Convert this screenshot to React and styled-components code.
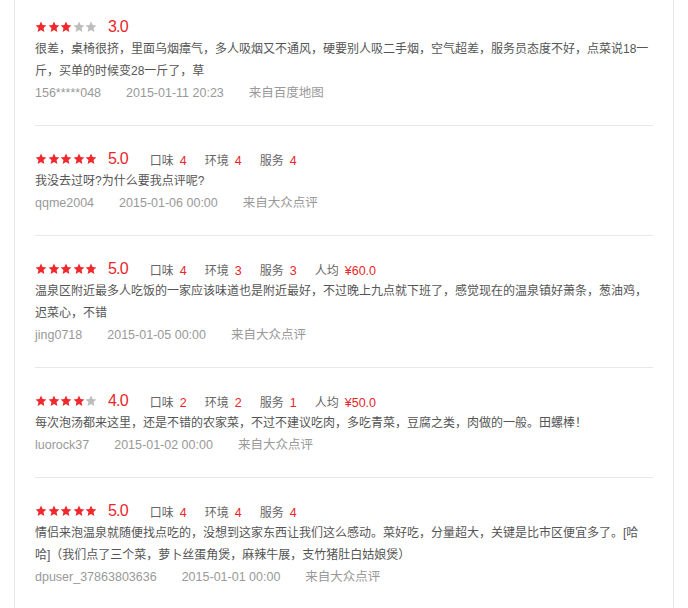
import React from "react";
import styled, { createGlobalStyle } from "styled-components";

const reviews = [
  {
    rating: 3,
    subs: [],
    text: "很差，桌椅很挤，里面乌烟瘴气，多人吸烟又不通风，硬要别人吸二手烟，空气超差，服务员态度不好，点菜说18一斤，买单的时候变28一斤了，草",
    user: "156*****048",
    time: "2015-01-11 20:23",
    from: "来自百度地图",
  },
  {
    rating: 5,
    subs: [
      ["口味", "4"],
      ["环境", "4"],
      ["服务", "4"],
    ],
    text: "我没去过呀?为什么要我点评呢?",
    user: "qqme2004",
    time: "2015-01-06 00:00",
    from: "来自大众点评",
  },
  {
    rating: 5,
    subs: [
      ["口味", "4"],
      ["环境", "3"],
      ["服务", "3"],
      ["人均", "¥60.0"],
    ],
    text: "温泉区附近最多人吃饭的一家应该味道也是附近最好，不过晚上九点就下班了，感觉现在的温泉镇好萧条，葱油鸡，迟菜心，不错",
    user: "jing0718",
    time: "2015-01-05 00:00",
    from: "来自大众点评",
  },
  {
    rating: 4,
    subs: [
      ["口味", "2"],
      ["环境", "2"],
      ["服务", "1"],
      ["人均", "¥50.0"],
    ],
    text: "每次泡汤都来这里，还是不错的农家菜，不过不建议吃肉，多吃青菜，豆腐之类，肉做的一般。田螺棒！",
    user: "luorock37",
    time: "2015-01-02 00:00",
    from: "来自大众点评",
  },
  {
    rating: 5,
    subs: [
      ["口味", "4"],
      ["环境", "4"],
      ["服务", "4"],
    ],
    text: "情侣来泡温泉就随便找点吃的，没想到这家东西让我们这么感动。菜好吃，分量超大，关键是比市区便宜多了。[哈哈]（我们点了三个菜，萝卜丝蛋角煲，麻辣牛展，支竹猪肚白姑娘煲）",
    user: "dpuser_37863803636",
    time: "2015-01-01 00:00",
    from: "来自大众点评",
  },
];

const Star = ({ on }) => (
  <StarIcon viewBox="0 0 24 24" $on={on}>
    <polygon points="12,1.2 15.2,8.2 22.8,9 17.1,14.2 18.7,21.8 12,17.9 5.3,21.8 6.9,14.2 1.2,9 8.8,8.2" />
  </StarIcon>
);

const App = () => {
  return (
    <>
      <GlobalStyle />
      <ReviewList>
        {reviews.map((r, i) => (
          <ReviewItem key={i}>
            <ReviewHead>
              <Stars>
                {Array.from({ length: 5 }, (v, index) => (
                  <Star key={index} on={index < r.rating} />
                ))}
              </Stars>
              <Score>{r.rating.toFixed(1)}</Score>
              {r.subs.map(([label, value]) => (
                <SubScore key={label}>
                  {label}
                  <SubValue>{value}</SubValue>
                </SubScore>
              ))}
            </ReviewHead>
            <ReviewText>{r.text}</ReviewText>
            <ReviewMeta>
              <MetaItem>{r.user}</MetaItem>
              <MetaItem>{r.time}</MetaItem>
              <MetaItem>{r.from}</MetaItem>
            </ReviewMeta>
          </ReviewItem>
        ))}
      </ReviewList>
    </>
  );
};

const GlobalStyle = createGlobalStyle`
  body {
    margin: 0;
    background: #fff;
    font-family: "Liberation Sans", "Noto Sans CJK SC", sans-serif;
  }
`;

const ReviewList = styled.div`
  width: 618px;
  margin-left: 14px;
  padding: 0 20px;
  border-left: 1px solid #e6e6e6;
  border-right: 1px solid #e6e6e6;
`;

const ReviewItem = styled.div`
  padding: 22px 0 21px;
  border-bottom: 1px solid #e8e8e8;

  &:first-child {
    padding-top: 16px;
  }
`;

const ReviewHead = styled.div`
  display: flex;
  align-items: center;
  height: 22px;
`;

const Stars = styled.div`
  display: flex;
  gap: 0.5px;
`;

const StarIcon = styled.svg`
  width: 12px;
  height: 12px;
  fill: ${(p) => (p.$on ? "#ee2a2f" : "#bdbdbd")};
`;

const Score = styled.span`
  margin-left: 11px;
  font-size: 16px;
  letter-spacing: -0.8px;
  color: #e8262b;
`;

const SubScore = styled.span`
  font-size: 12px;
  color: #666;
  margin-left: 22px;

  & + & {
    margin-left: 18px;
  }
`;

const SubValue = styled.span`
  color: #e8262b;
  font-size: 12.5px;
  margin-left: 6px;
`;

const ReviewText = styled.p`
  margin: 0;
  font-size: 12px;
  line-height: 22px;
  color: #555;
`;

const ReviewMeta = styled.div`
  display: flex;
  font-size: 12.5px;
  line-height: 22px;
  color: #999;
`;

const MetaItem = styled.span`
  margin-right: 25px;
`;

export default App;
